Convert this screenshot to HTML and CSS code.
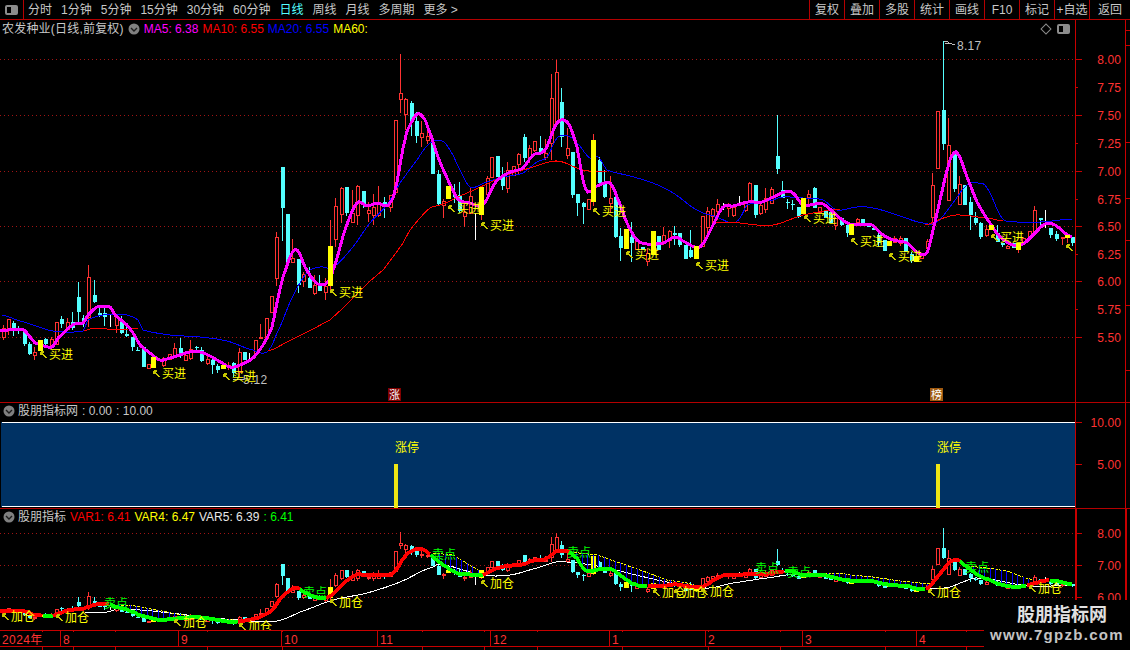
FILE: index.html
```html
<!DOCTYPE html>
<html lang="zh-CN">
<head>
<meta charset="utf-8">
<title>农发种业 日线</title>
<link rel="stylesheet" href="styles.css">
</head>
<body>
<div class="app">
  <header class="toolbar">
    <div class="panel-toggle"><span class="toggle-icon"></span></div>
    <nav class="periods">
      <span>分时</span><span>1分钟</span><span>5分钟</span><span>15分钟</span><span>30分钟</span><span>60分钟</span>
      <span class="active">日线</span><span>周线</span><span>月线</span><span>多周期</span><span>更多 &gt;</span>
    </nav>
    <nav class="tools">
      <span>复权</span><span>叠加</span><span>多股</span><span>统计</span><span>画线</span><span>F10</span><span>标记</span><span>+自选</span><span>返回</span>
    </nav>
  </header>

  <section class="pane pane-main">
    <svg class="plot" id="plot-main"></svg>
    <svg class="axis" id="axis-main"></svg>
    <div class="legend legend-main">
      <span class="name name-wide">农发种业(日线,前复权)</span>
      <svg class="chev" viewBox="0 0 12 12"><circle cx="6" cy="6" r="5.5"/><path d="M3 5l3 3 3-3"/></svg>
      <span class="c-magenta ma">MA5: 6.38</span>
      <span class="c-red ma">MA10: 6.55</span>
      <span class="c-blue ma">MA20: 6.55</span>
      <span class="c-yellow ma">MA60:</span>
    </div>
    <div class="corner-icons">
      <span class="diamond"></span>
      <span class="toggle-icon"></span>
    </div>
  </section>

  <section class="pane pane-sub">
    <svg class="plot" id="plot-sub"></svg>
    <svg class="axis" id="axis-sub"></svg>
    <div class="legend legend-ind">
      <svg class="chev" viewBox="0 0 12 12"><circle cx="6" cy="6" r="5.5"/><path d="M3 5l3 3 3-3"/></svg>
      <span class="name">股朋指标网</span>
      <span class="name">: 0.00</span>
      <span class="name">: 10.00</span>
    </div>
  </section>

  <section class="pane pane-ind">
    <svg class="plot" id="plot-ind"></svg>
    <svg class="axis" id="axis-ind"></svg>
    <div class="legend legend-ind">
      <svg class="chev" viewBox="0 0 12 12"><circle cx="6" cy="6" r="5.5"/><path d="M3 5l3 3 3-3"/></svg>
      <span class="name">股朋指标</span>
      <span class="c-red ma">VAR1: 6.41</span>
      <span class="c-yellow ma">VAR4: 6.47</span>
      <span class="c-white ma">VAR5: 6.39</span>
      <span class="c-green ma">: 6.41</span>
    </div>
  </section>

  <svg class="dates" id="dates"></svg>

  <aside class="watermark">
    <strong>股朋指标网</strong>
    <span>www.7gpzb.com</span>
  </aside>
</div>
<script src="chart.js"></script>
</body>
</html>
```
FILE: styles.css
```css
* { box-sizing: border-box; }
html, body { margin: 0; padding: 0; background: #000; }
body {
  width: 1130px;
  height: 650px;
  overflow: hidden;
  font: 12px/1 "Liberation Sans", "Noto Sans CJK SC", sans-serif;
  color: #c8c8c8;
}
.app { position: relative; display: flex; flex-direction: column; width: 1130px; height: 650px; overflow: hidden; }

.toolbar { display: flex; align-items: stretch; height: 20px; border-bottom: 1px solid #b40000; flex: none; }
.panel-toggle { width: 24px; border-right: 1px solid #b40000; display: flex; align-items: center; justify-content: center; }
.toggle-icon {
  display: block; width: 13px; height: 10px; border: 2px solid #8c8c8c; border-radius: 2px;
  background: linear-gradient(to right, #000 50%, #8c8c8c 50%);
}
.periods { display: flex; align-items: center; gap: 9px; padding-left: 4px; }
.periods .active { color: #54ffff; }
.tools { display: flex; margin-left: auto; }
.tools span { width: 35px; border-left: 1px solid #b40000; display: flex; align-items: center; justify-content: center; }
.tools span:last-child { width: 41px; }

.pane { position: relative; display: flex; flex: none; }
.pane-main { height: 383px; border-bottom: 1px solid #b40000; }
.pane-sub { height: 106px; border-bottom: 1px solid #b40000; }
.pane-ind { height: 121px; }
.plot { display: block; width: 1075px; height: 100%; flex: none; }
.axis { display: block; width: 55px; height: 100%; flex: none; }

.legend { position: absolute; left: 2px; display: flex; align-items: center; height: 14px; white-space: nowrap; }
.legend-main { top: 2px; gap: 4px; }
.name-wide { letter-spacing: .2px; }
.legend-ind { top: 1px; left: 3px; gap: 4px; }
.legend-ind .chev { margin-right: -1px; }
.chev { width: 12px; height: 12px; flex: none; }
.chev circle { fill: #808080; }
.chev path { fill: none; stroke: #1c1c1c; stroke-width: 1.4; }
.c-magenta { color: #ff00ff; }
.c-red { color: #ff0000; }
.c-blue { color: #0000ff; }
.c-yellow { color: #ffff00; }
.c-white { color: #e8e8e8; }
.c-green { color: #00ff00; }

.corner-icons { position: absolute; top: 4px; left: 1042px; display: flex; align-items: center; gap: 7px; }
.diamond { display: block; width: 8px; height: 8px; border: 1px solid #8c8c8c; transform: rotate(45deg); }

.dates { display: block; width: 1130px; height: 20px; flex: none; }

.watermark {
  position: absolute; left: 984px; top: 600px; width: 146px; height: 50px;
  background: #000; display: flex; flex-direction: column; align-items: center; gap: 3px; padding-top: 6px;
}
.watermark strong { font-size: 18px; line-height: 18px; font-weight: 700; color: #e0e0e0; margin-left: 10px; }
.watermark span { font-size: 15px; line-height: 15px; font-weight: 700; letter-spacing: 1.3px; color: #c4c4c4; }

/* chart marks */
svg * { shape-rendering: crispEdges; }
.chev * { shape-rendering: auto; }
.grid { stroke: #a01414; stroke-width: 1; stroke-dasharray: 1 3; fill: none; }
.rr { fill: #ff3232; }
.rh { fill: #000; stroke: #ff3232; stroke-width: 1; }
.cy { fill: #54ffff; }
.ye { fill: #ffff00; }
.wh { fill: #ffffff; }
.ma5 { fill: none; stroke: #ff00ff; stroke-width: 3; }
.ma20 { fill: none; stroke: #0000ff; stroke-width: 1; }
.ma10 { fill: none; stroke: #ff0000; stroke-width: 1; }
.tag { font: 12px "Noto Sans CJK SC", sans-serif; fill: #ffff00; }
.tag-green { font: 12px "Noto Sans CJK SC", sans-serif; fill: #00ff00; }
.arrow { fill: none; stroke: #c8c800; stroke-width: 1.5; }
.note { font: 12px "Liberation Sans", sans-serif; fill: #c0c0c0; letter-spacing: .3px; }
.note-line { fill: none; stroke: #c0c0c0; stroke-width: 1; }
.flag { font: 11px "Noto Sans CJK SC", sans-serif; fill: #fff; text-anchor: middle; }
.flag-up { fill: #800000; }
.flag-list { fill: #a05a10; }
.band { fill: #003264; }
.band-edge { fill: #fff; }
.limit-bar { fill: #f0e614; }
.axis-line { fill: #c80000; }
.axis-text { font: 12px "Liberation Sans", sans-serif; fill: #ff3232; text-anchor: end; letter-spacing: .1px; }
.date-text { font: 12px "Liberation Sans", "Noto Sans CJK SC", sans-serif; fill: #ff3232; letter-spacing: .4px; }
.thick-red { fill: none; stroke: #ff0000; stroke-width: 4; }
.thick-green { fill: none; stroke: #00ff00; stroke-width: 3.5; }
.white-line { fill: none; stroke: #ffffff; stroke-width: 1; }
.yellow-line { fill: none; stroke: #ffff00; stroke-width: 1; stroke-dasharray: 3 1; }
.blue-bar { stroke: #0000ff; stroke-width: 1; }
```
FILE: chart.js
```js
var NS = "http://www.w3.org/2000/svg";

function el(parent, tag, attrs, text) {
  var n = document.createElementNS(NS, tag);
  for (var k in attrs) n.setAttribute(k, attrs[k]);
  if (text != null) n.textContent = text;
  parent.appendChild(n);
  return n;
}
function setup(id, x, y, w, h) {
  var s = document.getElementById(id);
  s.setAttribute("viewBox", x + " " + y + " " + w + " " + h);
  s.setAttribute("preserveAspectRatio", "none");
  return s;
}

/* x, high, body top, body bottom, low, kind: r hollow red, c cyan, y yellow, w white */
var CANDLES = [
[3,325,328,337,340,"r"],[8,319,319,330,335,"r"],[13,321,323,329,336,"c"],[18,326,328,330,334,"c"],[24,331,332,344,346,"c"],
[29,342,344,354,355,"c"],[34,347,352,355,360,"r"],[40,340,340,351,351,"y"],[45,338,339,344,346,"c"],[51,337,339,347,348,"r"],
[56,322,322,344,344,"r"],[61,316,319,324,328,"c"],[67,318,322,329,330,"r"],[72,312,322,328,330,"c"],[78,282,297,312,323,"c"],
[83,315,318,322,327,"c"],[88,265,277,317,327,"r"],[94,280,295,302,303,"c"],[99,308,313,316,317,"c"],[104,308,313,317,326,"c"],
[110,315,315,327,327,"w"],[116,315,317,325,333,"r"],[121,316,322,333,334,"c"],[126,325,334,336,337,"c"],[132,337,337,347,351,"c"],
[137,347,350,351,350,"c"],[143,347,347,367,367,"c"],[148,364,364,368,368,"r"],[153,357,357,368,368,"y"],[163,357,358,365,367,"r"],
[169,354,354,359,360,"r"],[174,343,348,355,357,"r"],[180,338,348,353,358,"c"],[185,355,355,360,360,"r"],[190,340,349,358,360,"r"],
[196,346,347,348,351,"c"],[201,347,350,361,362,"c"],[207,356,359,363,365,"r"],[212,358,360,365,374,"c"],[217,364,366,370,373,"c"],
[223,365,365,369,369,"y"],[228,362,365,367,370,"r"],[233,362,363,373,377,"c"],[239,348,352,372,377,"r"],[244,352,352,360,360,"c"],
[249,353,353,360,360,"w"],[255,340,340,354,357,"r"],[260,324,337,338,338,"r"],[266,318,318,338,338,"r"],[271,296,296,312,312,"r"],
[276,232,237,278,286,"r"],[282,167,167,208,241,"c"],[287,214,214,263,263,"c"],[292,239,258,262,263,"r"],[298,259,259,285,293,"c"],
[303,272,274,281,287,"r"],[309,267,278,288,288,"c"],[314,275,285,293,295,"r"],[319,275,283,291,291,"c"],[325,278,286,292,300,"r"],
[330,220,246,286,290,"y"],[335,198,206,239,247,"r"],[341,187,188,214,223,"r"],[346,187,187,213,216,"c"],[352,190,213,222,223,"r"],
[357,185,186,215,225,"r"],[363,191,191,205,208,"c"],[368,202,210,213,222,"r"],[373,194,207,215,225,"r"],[378,186,203,215,217,"r"],
[384,197,202,207,218,"c"],[390,195,195,207,212,"r"],[395,120,120,192,192,"r"],[400,54,93,99,113,"r"],[405,98,99,114,130,"r"],
[411,101,103,121,136,"c"],[416,112,121,136,143,"c"],[421,121,133,137,147,"r"],[427,130,136,140,144,"r"],[432,140,143,174,174,"c"],
[438,170,174,204,205,"c"],[443,199,201,205,218,"r"],[448,186,186,199,199,"y"],[454,184,195,197,203,"c"],[459,182,195,211,213,"c"],
[464,203,212,216,227,"r"],[470,187,196,213,213,"r"],[475,213,213,240,240,"w"],[481,187,187,215,220,"y"],[487,176,178,194,200,"r"],
[491,157,157,177,178,"r"],[497,156,156,177,177,"c"],[502,167,177,186,190,"c"],[507,162,170,188,193,"r"],[513,166,166,175,176,"r"],
[518,153,154,164,174,"r"],[524,134,137,158,162,"c"],[529,145,148,158,163,"r"],[534,141,141,150,152,"r"],[540,136,148,154,155,"c"],
[545,139,153,157,160,"r"],[551,74,98,143,160,"r"],[556,60,72,122,123,"r"],[561,88,102,137,147,"c"],[567,128,148,155,159,"r"],
[572,152,152,195,198,"c"],[577,194,194,203,216,"c"],[583,202,203,207,224,"c"],[588,199,199,209,209,"r"],[593,134,140,202,206,"y"],
[599,157,160,183,187,"c"],[604,170,183,197,198,"c"],[610,176,198,203,213,"r"],[615,197,197,237,238,"c"],[620,228,236,248,261,"c"],
[626,229,229,249,249,"y"],[631,222,237,243,262,"c"],[636,237,241,249,250,"r"],[642,247,247,250,250,"c"],[647,248,253,261,266,"r"],
[653,231,231,254,254,"y"],[658,236,236,250,250,"c"],[663,227,235,243,245,"r"],[669,230,231,240,248,"r"],[674,226,233,235,245,"c"],
[679,233,233,245,247,"c"],[685,245,245,259,259,"c"],[690,230,250,257,258,"c"],[696,246,246,259,259,"y"],[702,216,216,246,246,"r"],
[707,207,211,227,237,"r"],[712,208,209,216,227,"r"],[717,199,204,211,220,"r"],[723,203,203,210,210,"w"],[728,203,206,208,217,"r"],
[733,207,207,215,217,"r"],[739,196,196,205,205,"w"],[745,203,203,210,212,"r"],[749,182,183,201,202,"r"],[755,185,185,215,218,"c"],
[760,203,205,213,215,"r"],[765,188,198,209,213,"r"],[771,187,189,203,204,"r"],[777,115,156,169,174,"c"],[782,181,190,198,198,"c"],
[787,199,202,203,209,"c"],[792,200,204,205,210,"c"],[798,207,207,217,218,"c"],[803,198,198,214,214,"y"],[808,190,194,197,205,"r"],
[814,187,188,208,208,"c"],[819,207,207,212,213,"r"],[825,210,210,218,218,"c"],[830,212,212,223,223,"c"],[835,217,218,225,230,"r"],
[841,218,218,225,226,"c"],[847,225,225,233,237,"c"],[851,224,224,235,235,"y"],[857,218,219,222,223,"r"],[862,219,219,223,225,"c"],
[868,223,223,227,227,"c"],[873,228,228,230,230,"c"],[878,231,235,243,247,"c"],[884,240,240,251,251,"c"],[889,241,241,246,246,"y"],
[894,236,238,242,243,"r"],[900,236,238,243,246,"r"],[905,238,238,252,252,"c"],[911,252,254,261,263,"c"],[916,256,256,262,262,"y"],
[921,254,254,258,258,"r"],[927,239,241,248,251,"r"],[932,173,185,217,225,"r"],[937,111,111,168,168,"r"],[943,41,110,144,150,"c"],
[948,118,145,200,200,"r"],[954,153,153,189,192,"c"],[959,176,184,204,205,"r"],[964,185,185,205,205,"c"],[970,197,202,215,230,"c"],
[975,212,218,223,225,"c"],[980,222,223,237,239,"c"],[986,225,229,235,237,"r"],[991,225,225,230,230,"y"],[997,225,233,242,242,"c"],
[1002,243,243,245,247,"c"],[1007,245,246,248,248,"r"],[1013,243,243,248,248,"c"],[1018,243,243,250,253,"y"],[1023,238,238,243,243,"r"],
[1029,231,231,238,238,"r"],[1034,206,210,232,234,"r"],[1040,218,218,220,228,"c"],[1045,210,210,228,228,"w"],[1050,228,228,235,238,"c"],
[1056,231,234,239,241,"c"],[1062,237,237,238,245,"r"],[1067,235,235,238,243,"y"],[1072,237,237,243,246,"c"]
];

var MA5 = [[0,331],[8,330],[24,330],[30,337],[35,343],[52,347],[58,338],[70,327],[78,323],[83,323],[88,315],[97,307],[110,307],[115,315],[127,325],[133,333],[140,345],[150,353],[160,360],[170,358],[183,354],[190,352],[200,352],[208,355],[217,360],[230,367],[240,365],[253,358],[263,345],[272,327],[278,298],[283,277],[292,253],[298,251],[305,267],[312,278],[318,284],[327,283],[333,270],[345,230],[357,203],[367,206],[378,203],[385,206],[390,203],[395,190],[405,140],[410,125],[417,114],[423,117],[428,128],[438,157],[448,180],[458,199],[470,203],[483,205],[495,183],[508,173],[523,168],[533,155],[545,150],[557,123],[568,123],[577,147],[583,180],[588,192],[597,186],[610,183],[617,197],[627,223],[637,240],[647,244],[663,243],[675,237],[683,241],[695,247],[702,245],[712,227],[723,207],[733,206],[748,202],[762,202],[773,197],[785,192],[793,193],[803,205],[823,204],[840,218],[850,224],[872,225],[883,235],[893,240],[907,243],[917,252],[927,253],[933,230],[940,200],[948,167],[953,154],[958,154],[967,177],[977,202],[990,223],[1000,237],[1013,245],[1023,244],[1033,235],[1045,224],[1055,225],[1065,233],[1072,237]];

var MA20 = [[2,315],[17,320],[33,325],[53,331],[83,331],[88,320],[103,315],[127,315],[138,320],[143,330],[170,335],[200,337],[227,341],[253,350],[267,352],[277,333],[292,298],[307,273],[320,267],[333,267],[353,247],[370,223],[387,205],[400,183],[417,160],[430,143],[442,141],[450,150],[460,170],[470,187],[487,182],[503,177],[523,173],[537,162],[547,157],[557,138],[568,136],[577,143],[590,158],[598,157],[607,170],[630,176],[653,183],[673,193],[697,210],[717,217],[733,223],[740,218],[747,205],[773,200],[783,197],[803,198],[823,200],[837,210],[857,207],[873,208],[897,215],[923,223],[937,222],[953,203],[967,185],[978,183],[987,188],[1002,218],[1017,222],[1040,222],[1072,219]];

var MA10 = [
  [[84,331],[90,329],[107,329],[117,330],[138,328]],
  [[268,351],[287,342],[307,332],[330,320],[342,309],[353,298],[368,283],[383,270],[393,257],[403,243],[410,230],[420,218],[430,208],[443,204],[460,196],[480,187],[507,175],[530,168],[557,161],[583,170],[607,172]],
  [[715,222],[740,223],[757,225],[773,225],[803,215],[840,209]],
  [[925,225],[947,217],[960,215],[993,219],[1003,221]]
];

var BUY = [[49,355],[162,374],[232,377],[339,293],[457,209],[490,226],[602,212],[635,255],[705,266],[813,219],[860,242],[898,257],[1000,238]];
var ADD = [[11,617],[65,618],[183,623],[248,627],[339,603],[490,584],[662,593],[683,593],[710,592],[937,593],[1038,589]];
var SELL = [[104,604],[303,593],[432,555],[567,553],[755,569],[787,573],[965,568]];

var WHITE = [[85,613],[107,612],[122,609],[240,620],[277,621],[300,612],[333,600],[367,593],[400,582],[433,567],[443,565],[483,575],[510,575],[533,569],[567,562],[700,587],[733,583],[767,578],[800,575],[930,588],[950,587],[960,583],[977,578],[1030,586],[1073,585]];
var YELLOW = [
  [[113,605],[130,605],[167,612],[193,617],[213,619],[233,619]],
  [[433,553],[453,555],[483,573]],
  [[570,552],[597,555],[617,562],[640,570],[667,580],[687,583],[700,587]],
  [[800,573],[840,573],[850,575],[873,577],[900,581],[930,584]],
  [[967,566],[987,568],[1007,571],[1023,577],[1033,580]]
];
var RISE = [[0,43],[53,110],[238,300],[326,431],[483,569],[648,785],[926,960],[1027,1050]];
var FALL = [[43,53],[110,238],[300,326],[431,483],[569,648],[785,926],[960,1027],[1050,1073]];

/* Catmull-Rom resampling so the hand-read averages curve like the real ones */
function smooth(a) {
  var out = [];
  for (var i = 0; i < a.length - 1; i++) {
    var p0 = a[Math.max(i - 1, 0)], p1 = a[i], p2 = a[i + 1], p3 = a[Math.min(i + 2, a.length - 1)];
    var n = Math.max(Math.round((p2[0] - p1[0]) / 2), 1);
    for (var j = 0; j < n; j++) {
      var t = j / n, t2 = t * t, t3 = t2 * t;
      out.push([
        p1[0] + t * (p2[0] - p1[0]),
        .5 * (2 * p1[1] + (p2[1] - p0[1]) * t + (2 * p0[1] - 5 * p1[1] + 4 * p2[1] - p3[1]) * t2 + (3 * p1[1] - p0[1] - 3 * p2[1] + p3[1]) * t3)
      ]);
    }
  }
  out.push(a[a.length - 1]);
  return out;
}
function pts(a, map) {
  return a.map(function (p) { return p[0] + "," + (map ? map(p[1]) : p[1]); }).join(" ");
}
function interp(a, x) {
  for (var i = 1; i < a.length; i++) {
    if (x <= a[i][0]) {
      var t = (x - a[i - 1][0]) / (a[i][0] - a[i - 1][0]);
      return a[i - 1][1] + t * (a[i][1] - a[i - 1][1]);
    }
  }
  return a[a.length - 1][1];
}
function gridLines(s, ys) {
  ys.forEach(function (y) {
    el(s, "line", { "class": "grid", x1: 0, x2: 1075, y1: y + .5, y2: y + .5 });
  });
}
function drawCandle(g, c, map) {
  var x = c[0], hi = map(c[1]), top = map(c[2]), bot = map(c[3]), lo = map(c[4]), k = c[5];
  var h = Math.max(bot - top, 1);
  if (k === "y") {
    el(g, "rect", { "class": "rr", x: x, y: hi, width: 1, height: Math.max(lo - hi, 1) });
    el(g, "rect", { "class": "ye", x: x - 2, y: top, width: 5, height: h });
  } else if (k === "c") {
    el(g, "rect", { "class": "cy", x: x, y: hi, width: 1, height: Math.max(lo - hi, 1) });
    el(g, "rect", { "class": "cy", x: x - 1.5, y: top, width: 4, height: h });
  } else if (k === "w") {
    el(g, "rect", { "class": "wh", x: x, y: hi, width: 1, height: Math.max(lo - hi, 1) });
  } else {
    el(g, "rect", { "class": "rr", x: x, y: hi, width: 1, height: Math.max(lo - hi, 1) });
    el(g, "rect", { "class": "rh", x: x - 1, y: top, width: 3, height: h });
  }
}
function arrow(s, left, cy) {
  el(s, "path", { "class": "arrow", d: "M" + (left - 3) + " " + (cy + 3) + "L" + (left - 8) + " " + (cy - 3) + "M" + (left - 8) + " " + (cy - 3) + "h3M" + (left - 8) + " " + (cy - 3) + "v3" });
}

/* main price pane */
(function () {
  var s = setup("plot-main", 0, 20, 1075, 382);
  var id = function (y) { return y; };
  gridLines(s, [59, 115, 171, 226, 281, 337]);
  CANDLES.filter(function (c) { return c[5] !== "y"; }).forEach(function (c) { drawCandle(s, c, id); });
  el(s, "polyline", { "class": "ma20", points: pts(smooth(MA20)) });
  MA10.forEach(function (a) { el(s, "polyline", { "class": "ma10", points: pts(smooth(a)) }); });
  el(s, "polyline", { "class": "ma5", points: pts(smooth(MA5)) });
  CANDLES.filter(function (c) { return c[5] === "y"; }).forEach(function (c) { drawCandle(s, c, id); });

  el(s, "path", { "class": "note-line", d: "M233 379H244" });
  el(s, "text", { "class": "note", x: 243, y: 384 }, "5.12");
  BUY.forEach(function (b) {
    arrow(s, b[0], b[1]);
    el(s, "text", { "class": "tag", x: b[0], y: b[1] + 4 }, "买进");
  });
  arrow(s, 1075, 248);

  el(s, "rect", { "class": "flag-up", x: 388, y: 388, width: 13, height: 13 });
  el(s, "text", { "class": "flag", x: 394.5, y: 399 }, "涨");
  el(s, "rect", { "class": "flag-list", x: 930, y: 388, width: 13, height: 13 });
  el(s, "text", { "class": "flag", x: 936.5, y: 399 }, "榜");

  el(s, "path", { "class": "note-line", d: "M944 41h3l2 2h-4M949 43l6 2" });
  el(s, "text", { "class": "note", x: 957, y: 50 }, "8.17");

  var a = setup("axis-main", 1075, 20, 55, 382);
  el(a, "rect", { "class": "axis-line", x: 1075, y: 20, width: 1, height: 382 });
  el(a, "rect", { "class": "axis-line", x: 1125, y: 20, width: 1, height: 382 });
  [[8, 59, 1], [7.75, 87, 0], [7.5, 115, 1], [7.25, 143, 0], [7, 171, 1], [6.75, 199, 0], [6.5, 226, 1], [6.25, 254, 0], [6, 281, 1], [5.75, 309, 0], [5.5, 337, 1]].forEach(function (t) {
    el(a, "rect", { "class": "axis-line", x: 1076, y: t[1], width: t[2] ? 6 : 2, height: 1 });
    el(a, "text", { "class": "axis-text", x: 1121, y: t[1] + 5 }, t[0].toFixed(2));
  });
  [30, 45, 142, 198, 240, 305, 370].forEach(function (y) {
    el(a, "rect", { "class": "axis-line", x: 1126, y: y, width: 4, height: 1 });
  });
})();

/* limit-up band pane */
(function () {
  var s = setup("plot-sub", 0, 403, 1075, 105);
  el(s, "rect", { "class": "band", x: 1, y: 422, width: 1074, height: 85 });
  el(s, "rect", { "class": "band-edge", x: 2, y: 422, width: 1073, height: 1 });
  el(s, "rect", { "class": "band-edge", x: 2, y: 506, width: 1073, height: 1 });
  [394, 936].forEach(function (x) {
    el(s, "rect", { "class": "limit-bar", x: x, y: 464, width: 4, height: 44 });
    el(s, "text", { "class": "tag", x: x + 1, y: 452 }, "涨停");
  });
  var a = setup("axis-sub", 1075, 403, 55, 105);
  el(a, "rect", { "class": "axis-line", x: 1075, y: 403, width: 1, height: 105 });
  el(a, "rect", { "class": "axis-line", x: 1125, y: 403, width: 1, height: 105 });
  [[10, 422], [5, 464]].forEach(function (t) {
    el(a, "rect", { "class": "axis-line", x: 1076, y: t[1], width: 6, height: 1 });
    el(a, "text", { "class": "axis-text", x: 1121, y: t[1] + 5 }, t[0].toFixed(2));
  });
})();

/* indicator pane */
(function () {
  var s = setup("plot-ind", 0, 509, 1075, 121);
  var map = function (y) { return Math.round(533 + (y - 59) * 32 / 111); };
  var ma5 = smooth(MA5);
  gridLines(s, [533, 565, 597]);
  el(s, "polyline", { "class": "white-line", points: pts(smooth(WHITE)) });
  var thick = function (x) { return 533 + (interp(ma5, x) - 59) * 32 / 111; };
  CANDLES.forEach(function (c) { drawCandle(s, c, map); });
  YELLOW.forEach(function (a) {
    el(s, "polyline", { "class": "yellow-line", points: pts(a) });
    for (var x = a[0][0] + 6; x < a[a.length - 1][0]; x += 5.5) {
      var bx = Math.round(x);
      el(s, "line", { "class": "blue-bar", x1: bx + .5, x2: bx + .5, y1: interp(a, x), y2: thick(x) });
    }
  });
  function seg(range, cls) {
    var a = [];
    for (var x = range[0]; x <= range[1]; x += 2) a.push([x, Math.round(thick(x))]);
    el(s, "polyline", { "class": cls, points: pts(a) });
  }
  FALL.forEach(function (r) { seg(r, "thick-green"); });
  RISE.forEach(function (r) { seg(r, "thick-red"); });

  ADD.forEach(function (b) {
    arrow(s, b[0], b[1]);
    el(s, "text", { "class": "tag", x: b[0], y: b[1] + 4 }, "加仓");
  });
  SELL.forEach(function (b) {
    el(s, "text", { "class": "tag-green", x: b[0], y: b[1] + 4 }, "卖点");
  });

  var a = setup("axis-ind", 1075, 509, 55, 121);
  el(a, "rect", { "class": "axis-line", x: 1075, y: 509, width: 2, height: 121 });
  el(a, "rect", { "class": "axis-line", x: 1125, y: 509, width: 2, height: 121 });
  [[8, 533], [7, 565], [6, 597]].forEach(function (t) {
    el(a, "rect", { "class": "axis-line", x: 1077, y: t[1], width: 5, height: 1 });
    el(a, "text", { "class": "axis-text", x: 1121, y: t[1] + 5 }, t[0].toFixed(2));
  });
})();

/* date axis */
(function () {
  var s = setup("dates", 0, 630, 1130, 20);
  el(s, "rect", { "class": "axis-line", x: 0, y: 630, width: 1130, height: 1 });
  el(s, "rect", { "class": "axis-line", x: 0, y: 646, width: 1130, height: 1 });
  el(s, "text", { "class": "date-text", x: 2, y: 644 }, "2024年");
  [[60, "8"], [178, "9"], [281, "10"], [377, "11"], [490, "12"], [609, "1"], [705, "2"], [802, "3"], [916, "4"]].forEach(function (t) {
    el(s, "rect", { "class": "axis-line", x: t[0], y: 630, width: 1, height: 16 });
    el(s, "text", { "class": "date-text", x: t[0] + 3, y: 644 }, t[1]);
  });
  [42, 73, 115, 207, 282, 422, 484, 537, 622, 708, 780, 885, 966].forEach(function (x) {
    el(s, "rect", { "class": "axis-line", x: x, y: 646, width: 1, height: 4 });
    el(s, "rect", { "class": "axis-line", x: x, y: 630, width: 1, height: 2 });
  });
})();
```
